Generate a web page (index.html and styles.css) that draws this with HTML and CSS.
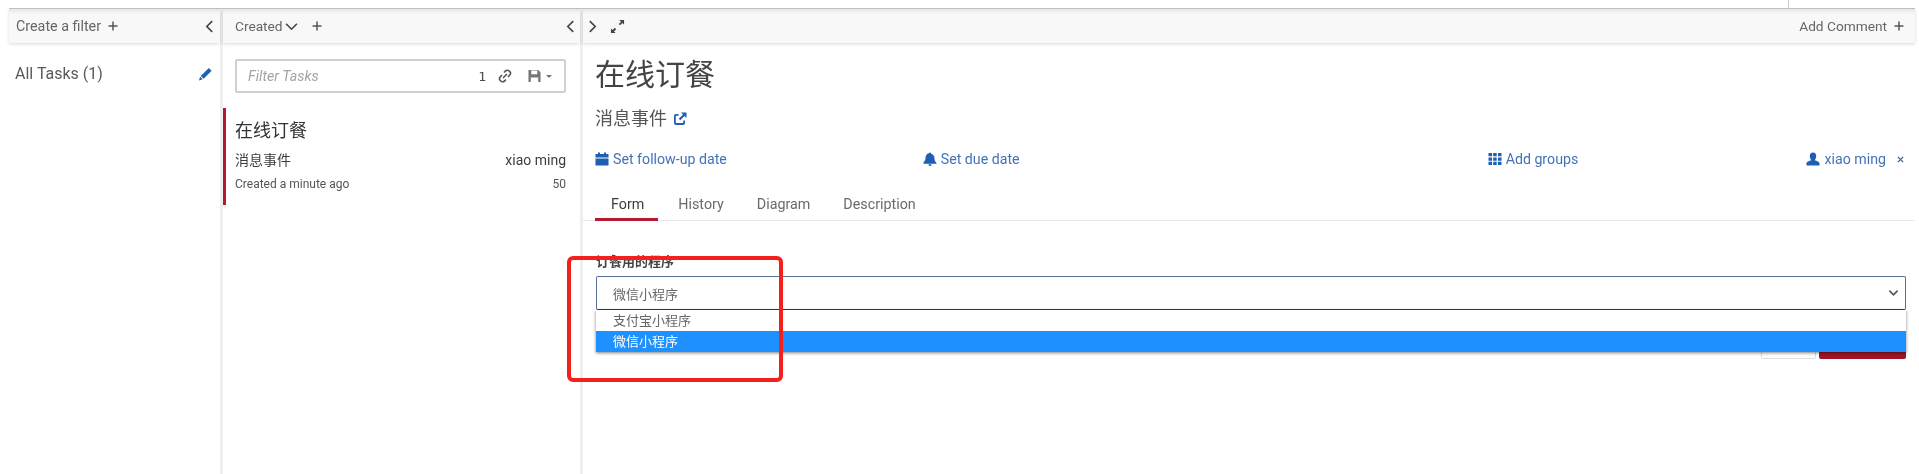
FILE: index.html
```html
<!DOCTYPE html>
<html lang="en">

<head>
    <meta charset="UTF-8">
    <title>Tasklist</title>
    <link rel="stylesheet" href="styles.css">
</head>

<body>
    <div class="top-strip"><span class="top-tick"></span></div>
    <div class="app">
        <!-- Filters -->
        <div class="col col-filters">
            <div class="col-header">
                <span class="header-item">Create a filter
                    <svg class="icon-plus" viewBox="0 0 10 10"><path d="M5 0.5v9M0.5 5h9" /></svg>
                </span>
                <svg class="icon-chev" viewBox="0 0 8 12"><path d="M6.5 1L1.5 6l5 5" /></svg>
            </div>
            <div class="filter-row">
                <span>All Tasks (1)</span>
                <svg class="icon-pencil" viewBox="0 0 16 16"><path d="M11.5 1.5l3 3L6 13l-3-3zM2.3 11l2.7 2.7L1 15z" /></svg>
            </div>
        </div>

        <!-- Task list -->
        <div class="col col-list">
            <div class="col-header">
                <span class="header-item">
                    <span>Created</span>
                    <svg class="icon-down" viewBox="0 0 12 8"><path d="M1 1.5l5 5 5-5" /></svg>
                    <svg class="icon-plus plus-wide" viewBox="0 0 10 10"><path d="M5 0.5v9M0.5 5h9" /></svg>
                </span>
                <svg class="icon-chev" viewBox="0 0 8 12"><path d="M6.5 1L1.5 6l5 5" /></svg>
            </div>
            <div class="search-box">
                <span class="search-placeholder">Filter Tasks</span>
                <span class="search-count">1</span>
                <svg class="icon-link" viewBox="0 0 14 14"><path d="M6 3.5l1.6-1.6a2.5 2.5 0 0 1 3.6 0.1l0.6 0.6a2.5 2.5 0 0 1 0 3.4L10 8M8 10.5l-1.6 1.6a2.5 2.5 0 0 1-3.6-0.1l-0.6-0.6a2.5 2.5 0 0 1 0-3.4L4 6M5 9l4-4" /></svg>
                <svg class="icon-save" viewBox="0 0 14 14"><path d="M0.5 0.5h10.5l2.5 2.5v10.5H0.5zM3.5 1v4h6.5V1zM3 8.5v5h8v-5z" fill-rule="evenodd" /></svg>
                <span class="caret"></span>
            </div>
            <div class="task-card">
                <div class="task-name">在线订餐</div>
                <div class="task-line">
                    <span>消息事件</span>
                    <span>xiao ming</span>
                </div>
                <div class="task-line task-meta">
                    <span>Created a minute ago</span>
                    <span>50</span>
                </div>
            </div>
        </div>

        <!-- Task detail -->
        <div class="col col-detail">
            <div class="col-header detail-header">
                <span class="header-item">
                    <svg class="icon-chev" viewBox="0 0 8 12"><path d="M1.5 1l5 5-5 5" /></svg>
                    <svg class="icon-expand" viewBox="0 0 16 16"><path d="M10 1h5v5l-1.8-1.8-2.4 2.4-1.4-1.4 2.4-2.4zM6 15H1v-5l1.8 1.8 2.4-2.4 1.4 1.4-2.4 2.4z" /></svg>
                </span>
                <span class="header-item">Add Comment
                    <svg class="icon-plus" viewBox="0 0 10 10"><path d="M5 0.5v9M0.5 5h9" /></svg>
                </span>
            </div>

            <div class="task-head">
                <h1 class="detail-title">在线订餐</h1>
                <div class="detail-sub">
                    <span>消息事件</span>
                    <svg class="icon-blue icon-share" viewBox="0 0 14 14"><path d="M5.5 2H3a2 2 0 0 0-2 2v7a2 2 0 0 0 2 2h7a2 2 0 0 0 2-2V8.5h-1.8V11H2.800V3.800h2.700zM8 0.500h5.500V6l-2-2-4.200 4.200-1.500-1.500L10 2.500z" /></svg>
                </div>
                <div class="action-row">
                    <a class="action">
                        <svg class="icon-blue" viewBox="0 0 14 14"><path d="M0.500 2h2.500V0.500h2V2h4V0.500h2V2h2.500v3.500H0.500zM0.500 6.500h13v7H0.500z" /></svg>
                        Set follow-up date
                    </a>
                    <a class="action">
                        <svg class="icon-blue" viewBox="0 0 14 14"><path d="M7 0.500a1 1 0 0 1 1 1v0.300c2.300 0.500 3.500 2.300 3.500 4.700 0 2.200 0.800 3.300 2 4.500v0.700H0.500V10.500c1.200-1.200 2-2.300 2-4.500 0-2.400 1.200-4.200 3.500-4.700V1.500a1 1 0 0 1 1-1zM5.300 12.300h3.400a1.700 1.700 0 0 1-3.400 0z" /></svg>
                        Set due date
                    </a>
                    <a class="action action-end">
                        <svg class="icon-blue" viewBox="0 0 14 14"><path d="M0.500 1h3.500v3.300H0.500zM5.200 1h3.500v3.300H5.200zM10 1h3.500v3.300H10zM0.500 5.400h3.500v3.300H0.500zM5.200 5.400h3.500v3.300H5.200zM10 5.400h3.500v3.300H10zM0.500 9.800h3.500v3.300H0.500zM5.200 9.800h3.500v3.300H5.200zM10 9.800h3.500v3.300H10z" /></svg>
                        Add groups
                    </a>
                    <a class="action action-end">
                        <svg class="icon-blue" viewBox="0 0 14 14"><path d="M7 0.500c2 0 3.200 1.500 3.200 3.500S9.200 7.400 8.800 8.300c1.500 0.700 4.700 1.300 4.700 3.200v2H0.500v-2c0-1.900 3.200-2.500 4.700-3.200C4.800 7.400 3.800 6 3.800 4S5 0.500 7 0.500z" /></svg>
                        xiao ming
                        <svg class="icon-x" viewBox="0 0 8 8"><path d="M1 1l6 6M7 1l-6 6" /></svg>
                    </a>
                </div>
            </div>

            <div class="tabs">
                <a class="tab tab-active">Form</a>
                <a class="tab">History</a>
                <a class="tab">Diagram</a>
                <a class="tab">Description</a>
            </div>

            <div class="task-form">
                <label class="field-label">订餐用的程序</label>
                <div class="select-wrap">
                    <div class="select-box">
                        <span>微信小程序</span>
                        <svg class="icon-select" viewBox="0 0 12 8"><path d="M1.500 1.500L6 6l4.500-4.500" /></svg>
                    </div>
                    <div class="select-menu">
                        <div class="select-option">支付宝小程序</div>
                        <div class="select-option option-on">微信小程序</div>
                    </div>
                </div>
                <div class="form-buttons">
                    <button class="btn btn-plain"></button>
                    <button class="btn btn-red"></button>
                </div>
                <!-- red box drawn on the screenshot -->
                <div class="callout"></div>
            </div>
        </div>
    </div>
</body>

</html>
```

FILE: styles.css
```css
html,
body {
    height: 100%;
    overflow: hidden;
}

body {
    font-family: Roboto, "Noto Sans CJK SC", sans-serif;
    font-size: 14px;
    color: #4a4a4a;
    background-color: #fff;
    margin: 0;
    padding: 0;
}

svg {
    flex: none;
}

.top-strip {
    height: 8px;
    display: flex;
    justify-content: flex-end;
    padding-right: 130px;
}

.top-tick {
    width: 1px;
    height: 8px;
    background-color: #ccc;
}

/* the reference is a soft, rescaled screenshot */
.app {
    display: flex;
    margin: 0 4px 0 9px;
    height: 465px;
    border-top: 1px solid #c4c4c4;
    filter: blur(0.4px);
}

.col {
    display: flex;
    flex-direction: column;
}

.col-filters {
    width: 211px;
    border-right: 3px solid #eee;
}

.col-list {
    width: 357px;
    border-right: 3px solid #eee;
}

.col-detail {
    flex: 1;
}

.col-header {
    height: 34px;
    display: flex;
    align-items: center;
    justify-content: space-between;
    background: linear-gradient(#e6e6e6, #f8f8f8 5px);
    box-shadow: 0 1px 3px rgba(0, 0, 0, 0.15);
    padding: 0 6px 0 7px;
    flex: none;
    color: #666;
    font-size: 13.7px;
}

.col-filters .col-header {
    font-size: 14.3px;
}

.col-list .col-header {
    padding: 0 5px 0 12px;
}

.detail-header {
    padding: 0 11px 0 5px;
}

.header-item {
    display: flex;
    align-items: center;
    gap: 7px;
}

.icon-plus {
    width: 10px;
    height: 10px;
    stroke: #555;
    stroke-width: 1.5;
    fill: none;
}

.plus-wide {
    margin-left: 7px;
}

.icon-chev {
    width: 9px;
    height: 13px;
    stroke: #444;
    stroke-width: 1.5;
    fill: none;
}

.icon-down {
    width: 13px;
    height: 9px;
    stroke: #444;
    stroke-width: 1.5;
    fill: none;
    margin-left: -5px;
}

.icon-expand {
    width: 15px;
    height: 15px;
    fill: #444;
    margin-left: 6px;
}

/* Filters */
.filter-row {
    display: flex;
    align-items: center;
    justify-content: space-between;
    margin-top: 20px;
    padding: 0 7px 0 6px;
    font-size: 16px;
    line-height: 22px;
    color: #5a5a5a;
}

.icon-pencil {
    width: 15px;
    height: 16px;
    fill: #1f5fb4;
}

/* Task list */
.search-box {
    height: 34px;
    box-sizing: border-box;
    margin: 16px 14px 0 12px;
    border: 2px solid #d0d0d0;
    border-radius: 2px;
    display: flex;
    align-items: center;
    padding: 0 12px 0 11px;
}

.search-placeholder {
    flex: 1;
    font-style: italic;
    font-size: 14.3px;
    color: #a5a5a5;
}

.search-count {
    font-family: "DejaVu Sans Mono", monospace;
    font-size: 13px;
    margin-right: 12px;
}

.icon-link {
    width: 14px;
    height: 14px;
    fill: none;
    stroke: #555;
    stroke-width: 1.6;
    margin-right: 16px;
}

.icon-save {
    width: 13px;
    height: 14px;
    fill: #777;
    margin-right: 5px;
}

.caret {
    width: 0;
    height: 0;
    border-left: 3.500px solid transparent;
    border-right: 3.500px solid transparent;
    border-top: 3.500px solid #777;
}

.task-card {
    margin-top: 15px;
    border-left: 3px solid #b5182f;
    padding: 11px 14px 13px 9px;
}

.task-name {
    font-size: 18px;
    line-height: 24px;
    color: #333;
}

.task-line {
    display: flex;
    justify-content: space-between;
    margin-top: 8px;
    line-height: 18px;
    color: #3d3d3d;
}

.task-meta {
    margin-top: 7px;
    font-size: 12px;
    line-height: 16px;
    color: #555;
}

/* Task detail */
.task-head {
    padding: 0 9px 0 12px;
}

.detail-title {
    margin: 12px 0 0 0;
    font-size: 30px;
    font-weight: 400;
    line-height: 40px;
    color: #444;
}

.detail-sub {
    display: flex;
    align-items: center;
    gap: 6px;
    margin-top: 12px;
    font-size: 18px;
    line-height: 24px;
    color: #555;
}

.icon-share {
    width: 14px;
    height: 14px;
}

.icon-blue {
    fill: #1c5fb5;
}

.action-row {
    display: grid;
    grid-template-columns: repeat(4, 1fr);
    margin-top: 18px;
    line-height: 20px;
}

.action {
    display: flex;
    align-items: center;
    gap: 4px;
    color: #4472b8;
    font-size: 14.2px;
}

.action .icon-blue {
    width: 14px;
    height: 14px;
}

.action-end {
    justify-self: end;
}

.icon-x {
    width: 7px;
    height: 7px;
    stroke: #44688f;
    stroke-width: 1.6;
    margin: 0 2px 0 7px;
}

.tabs {
    display: flex;
    gap: 3px;
    margin-top: 19px;
    padding-left: 12px;
    border-bottom: 1px solid #e8e8e8;
}

.tab {
    padding: 6px 15px 4px;
    line-height: 20px;
    margin-bottom: -1px;
    border-bottom: 3px solid transparent;
    color: #6a6a6a;
    font-size: 14.3px;
}

.tab-active {
    padding: 6px 14px 4px 16px;
    margin-right: 2px;
    border-bottom-color: #b5182f;
    color: #3d3d3d;
}

.task-form {
    position: relative;
    padding: 32px 9px 0 13px;
}

.field-label {
    display: block;
    font-size: 13px;
    font-weight: 700;
    line-height: 18px;
    margin-bottom: 5px;
    color: #444;
}

.select-wrap {
    position: relative;
}

.select-box {
    height: 34px;
    box-sizing: border-box;
    border: 1px solid #5a7298;
    border-bottom-color: #2c3e55;
    border-radius: 2px;
    display: flex;
    align-items: center;
    justify-content: space-between;
    padding: 0 6px 0 16px;
    font-size: 13px;
    color: #666;
}

.icon-select {
    width: 11px;
    height: 8px;
    stroke: #555;
    stroke-width: 1.8;
    fill: none;
}

.select-menu {
    position: absolute;
    top: 100%;
    left: 0;
    right: 0;
    background-color: #fff;
    box-shadow: 0 1px 3px rgba(0, 0, 0, 0.5);
    font-size: 13px;
    line-height: 20px;
    color: #666;
    z-index: 1;
}

.select-option {
    padding: 1px 0 0 17px;
}

.option-on {
    background-color: #1e90ff;
    color: #fff;
}

.form-buttons {
    display: flex;
    justify-content: flex-end;
    gap: 3px;
    margin-top: 15px;
}

.btn {
    height: 34px;
    border: none;
    padding: 0;
    border-radius: 2px;
}

.btn-plain {
    width: 55px;
    background-color: #fff;
    border: 1px solid #ddd;
}

.btn-red {
    width: 87px;
    background-color: #a01428;
}

.callout {
    position: absolute;
    left: -16px;
    top: 35px;
    width: 216px;
    height: 126px;
    box-sizing: border-box;
    border: 4px solid #f5201c;
    border-radius: 6px;
    z-index: 2;
}
```
